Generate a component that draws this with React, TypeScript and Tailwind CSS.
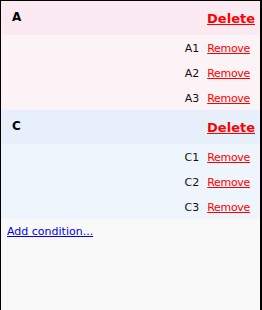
import React from "react";

const groups = [
  { name: "A", items: ["A1", "A2", "A3"], head: "bg-[#fbeaf1]", body: "bg-[#fbf3f6]" },
  { name: "C", items: ["C1", "C2", "C3"], head: "bg-[#e7f0fa]", body: "bg-[#eef5fc]" },
];

export default function App() {
  return (
    <div
      className="h-[310px] w-[262px] bg-[#f9f9f9] border-t border-l border-r-2 border-black text-black"
      style={{ fontFamily: '"DejaVu Sans", Verdana, sans-serif' }}
    >
      {groups.map((g) => (
        <div key={g.name}>
          <div className={`${g.head} h-[34px] flex justify-between pl-[11px] pr-[5px]`}>
            <div className="text-[12px] font-bold leading-[14px] pt-[9px]">{g.name}</div>
            <a href="#" className="text-[13px] font-bold leading-[15px] pt-[10px] text-[#ff0000] underline">
              Delete
            </a>
          </div>
          <div className={g.body}>
            {g.items.map((it) => (
              <div key={it} className="h-[25px] flex justify-end items-start gap-[8px] pr-[10px] pt-[7px] text-[11px] leading-[13px]">
                <span className="text-[#111]">{it}</span>
                <a href="#" className="text-[#ff0000] underline tracking-[-0.3px]">Remove</a>
              </div>
            ))}
          </div>
        </div>
      ))}
      <div className="pl-[6px] pt-[6px] text-[11px] leading-[13px]">
        <a href="#" className="text-[#0000ee] underline">Add condition...</a>
      </div>
    </div>
  );
}
